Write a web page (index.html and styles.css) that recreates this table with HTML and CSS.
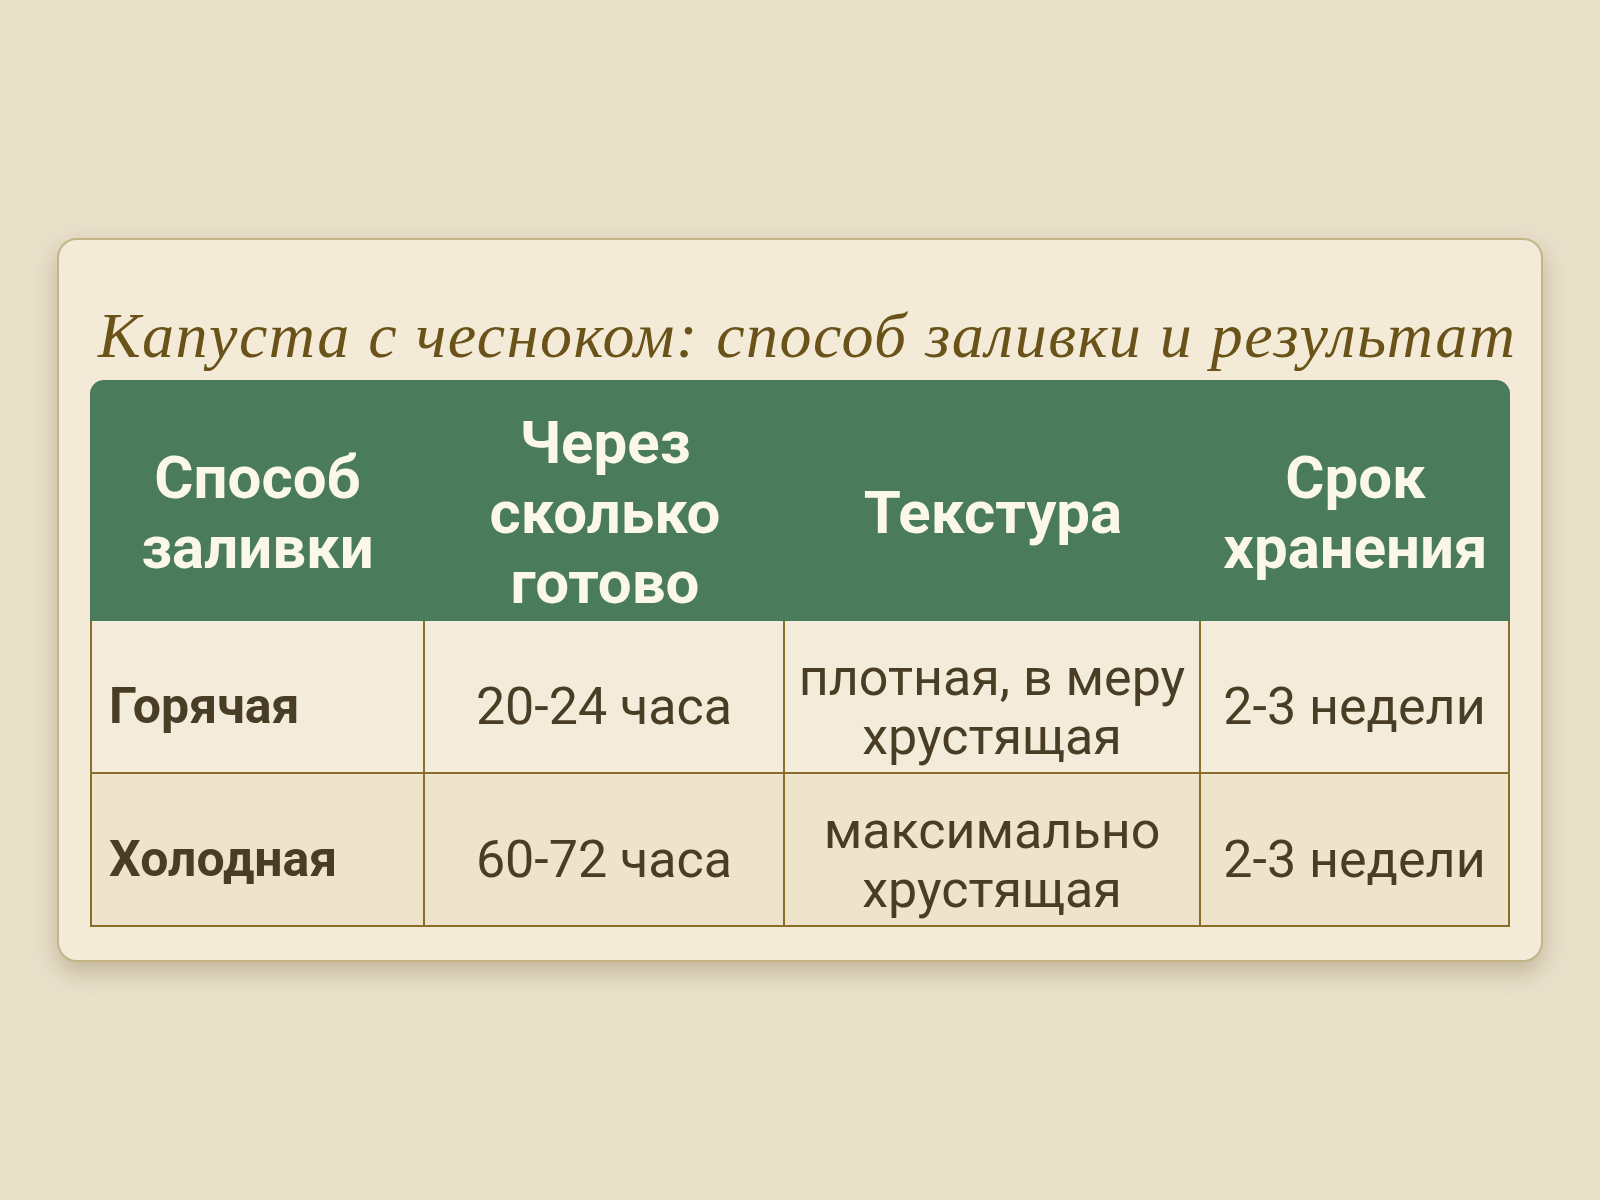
FILE: index.html
```html
<!DOCTYPE html>
<html lang="ru">
<head>
<meta charset="utf-8">
<title>Капуста с чесноком</title>
<link rel="stylesheet" href="styles.css">
</head>
<body>
<main class="page">
  <section class="card">
    <h1 class="title">Капуста с чесноком: способ заливки и результат</h1>
    <table class="grid">
      <colgroup>
        <col class="c1"><col class="c2"><col class="c3"><col class="c4">
      </colgroup>
      <thead>
        <tr>
          <th>Способ<br>заливки</th>
          <th>Через<br>сколько<br>готово</th>
          <th>Текстура</th>
          <th>Срок<br>хранения</th>
        </tr>
      </thead>
      <tbody>
        <tr class="row-a">
          <td class="name">Горячая</td>
          <td>20-24 часа</td>
          <td>плотная, в меру<br>хрустящая</td>
          <td>2-3 недели</td>
        </tr>
        <tr class="row-b">
          <td class="name">Холодная</td>
          <td>60-72 часа</td>
          <td>максимально<br>хрустящая</td>
          <td>2-3 недели</td>
        </tr>
      </tbody>
    </table>
  </section>
</main>
</body>
</html>
```
FILE: styles.css
```css
html, body {
  margin: 0;
  padding: 0;
}
body {
  background: #e9e0ca;
  font-family: Roboto, "Noto Sans", sans-serif;
}
.page {
  height: 1200px;
  display: flex;
  align-items: center;
  justify-content: center;
}
.card {
  width: 1486px;
  box-sizing: border-box;
  background: #f3ebd8;
  border: 2px solid #c4b487;
  border-radius: 20px;
  padding: 60px 31px 33px;
  box-shadow: 0 10px 24px rgba(110, 90, 50, 0.32);
}
.title {
  margin: 0 0 8px 8px;
  font-family: "Liberation Serif", serif;
  font-style: italic;
  font-weight: normal;
  font-size: 64px;
  line-height: 72px;
  letter-spacing: 1.5px;
  color: #6a5319;
  white-space: nowrap;
}
.grid {
  width: 100%;
  table-layout: fixed;
  border-collapse: separate;
  border-spacing: 0;
}
.c1 { width: 335px; }
.c2 { width: 360px; }
.c3 { width: 416px; }
.c4 { width: auto; }
.grid th {
  background: #4a7b5a;
  color: #fbf8ea;
  font-weight: 700;
  font-size: 60px;
  line-height: 70px;
  height: 241px;
  padding: 24px 8px 0;
  text-align: center;
  vertical-align: middle;
  box-sizing: border-box;
}
.grid th:first-child { border-top-left-radius: 14px; }
.grid th:last-child { border-top-right-radius: 14px; }
.grid td {
  color: #4a3d25;
  font-size: 52px;
  line-height: 59px;
  text-align: center;
  vertical-align: middle;
  padding: 20px 8px 0;
  height: 153px;
  box-sizing: border-box;
  border-right: 2px solid #8a6d2b;
  border-bottom: 2px solid #8a6d2b;
}
.grid td:first-child { border-left: 2px solid #8a6d2b; }
.grid td.name {
  text-align: left;
  padding-left: 17px;
  font-weight: 700;
  font-size: 50px;
}
.row-a td { background: #f4ecda; }
.row-b td { background: #eee3cb; }
```
